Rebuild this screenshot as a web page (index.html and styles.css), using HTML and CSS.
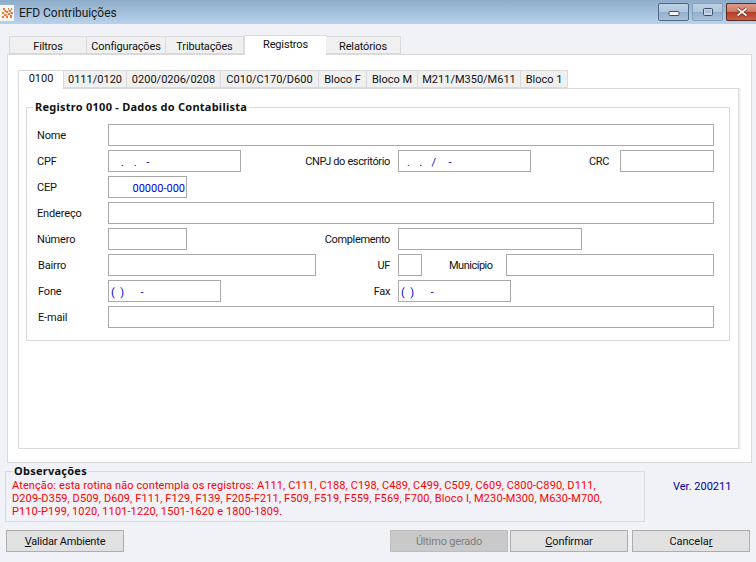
FILE: index.html
```html
<!DOCTYPE html>
<html lang="pt">
<head>
<meta charset="utf-8">
<title>EFD Contribuições</title>
<link rel="stylesheet" href="styles.css">
</head>
<body>
<div class="window">
  <header class="titlebar">
    <svg class="app-icon" width="14" height="16" viewBox="0 0 14 16">
      <rect width="14" height="16" fill="#f8f5f0"/>
      <path d="M3 3h2v2H3zM8 3h1v2H8zM11 3h1v2h-1zM5 5h1v2H5zM9 5h2v2H9zM2 7h2v2H2zM6 6h2v2H6zM11 7h2v2h-2zM4 9h2v2H4zM8 8h2v2H8zM2 11h2v2H2zM6 11h2v2H6zM10 10h2v3h-2z" fill="#ee7a36"/>
      <path d="M4 5h1v2H4zM8 5h1v1H8zM10 7h1v2h-1zM6 9h2v2H6z" fill="#f7b48a"/>
    </svg>
    <span class="title">EFD Contribuições</span>
    <div class="controls">
      <div class="ctl"><svg width="14" height="8" viewBox="0 0 14 8"><rect x="2" y="3.5" width="10" height="4" rx="1" fill="#f4f6f8" stroke="#39506b"/></svg></div>
      <div class="ctl ctl-max"><svg width="12" height="10" viewBox="0 0 12 10"><rect x="1.5" y="1.5" width="9" height="7" rx="1" fill="#c9d8e8" stroke="#39506b" stroke-width="1"/><rect x="3" y="3" width="6" height="3" fill="#a9bfd6"/></svg></div>
      <div class="ctl ctl-close"><svg width="14" height="10" viewBox="0 0 14 10"><path d="M2.5 1.5l9 7M11.5 1.5l-9 7" stroke="#4a2018" stroke-width="3.4"/><path d="M2.5 1.5l9 7M11.5 1.5l-9 7" stroke="#f7f2ef" stroke-width="2"/></svg></div>
    </div>
  </header>

  <nav class="tabs outer-tabs">
    <span class="tab t-filtros">Filtros</span>
    <span class="tab t-config">Configurações</span>
    <span class="tab t-trib">Tributações</span>
    <span class="tab t-reg active">Registros</span>
    <span class="tab t-rel">Relatórios</span>
  </nav>

  <main class="outer-panel">
    <nav class="tabs inner-tabs">
      <span class="itab i-0100 active">0100</span>
      <span class="itab i-0111">0111/0120</span>
      <span class="itab i-0200">0200/0206/0208</span>
      <span class="itab i-c010">C010/C170/D600</span>
      <span class="itab i-f">Bloco F</span>
      <span class="itab i-m">Bloco M</span>
      <span class="itab i-m211">M211/M350/M611</span>
      <span class="itab i-1">Bloco 1</span>
    </nav>
    <section class="inner-panel">
      <fieldset class="group">
        <legend>Registro 0100 - Dados do Contabilista</legend>
        <div class="row"><label class="lbl">Nome</label><div class="field w-full"></div></div>
        <div class="row">
          <label class="lbl">CPF</label><div class="field w-133 mask mask-cpf">.&nbsp;&nbsp;&nbsp;.&nbsp;&nbsp;&nbsp;-</div>
          <label class="lbl-r w-149">CNPJ do escritório</label><div class="field w-133 mask mask-cnpj">.&nbsp;&nbsp;&nbsp;.&nbsp;&nbsp;&nbsp;/&nbsp;&nbsp;&nbsp;&nbsp;-</div>
          <label class="lbl-r w-78 gap-11">CRC</label><div class="field w-94"></div>
        </div>
        <div class="row"><label class="lbl">CEP</label><div class="field w-79 mask mask-cep">00000-000</div></div>
        <div class="row"><label class="lbl">Endereço</label><div class="field w-full"></div></div>
        <div class="row">
          <label class="lbl">Número</label><div class="field w-79"></div>
          <label class="lbl-r w-203">Complemento</label><div class="field w-184"></div>
        </div>
        <div class="row">
          <label class="lbl alt">Bairro</label><div class="field w-208"></div>
          <label class="lbl-r w-74">UF</label><div class="field w-24"></div>
          <label class="lbl-mun">Município</label><div class="field w-208"></div>
        </div>
        <div class="row">
          <label class="lbl alt">Fone</label><div class="field w-113 mask mask-tel">(&nbsp;&nbsp;)&nbsp;&nbsp;&nbsp;&nbsp;&nbsp;&nbsp;-</div>
          <label class="lbl-r w-169">Fax</label><div class="field w-113 mask mask-tel">(&nbsp;&nbsp;)&nbsp;&nbsp;&nbsp;&nbsp;&nbsp;&nbsp;-</div>
        </div>
        <div class="row"><label class="lbl alt">E-mail</label><div class="field w-full"></div></div>
      </fieldset>
    </section>
  </main>

  <div class="info-row">
    <fieldset class="obs">
      <legend>Observações</legend>
      <p>Atenção: esta rotina não contempla os registros: A111, C111, C188, C198, C489, C499, C509, C609, C800-C890, D111,<br>D209-D359, D509, D609, F111, F129, F139, F205-F211, F509, F519, F559, F569, F700, Bloco I, M230-M300, M630-M700,<br>P110-P199, 1020, 1101-1220, 1501-1620 e 1800-1809.</p>
    </fieldset>
    <span class="version">Ver. 200211</span>
  </div>

  <footer class="buttons">
    <button class="btn"><u>V</u>alidar Ambiente</button>
    <span class="spring"></span>
    <button class="btn disabled">Último <u>g</u>erado</button>
    <button class="btn"><u>C</u>onfirmar</button>
    <button class="btn btn-last">Cancela<u>r</u></button>
  </footer>
</div>
</body>
</html>
```
FILE: styles.css
```css
* { box-sizing: border-box; }
html, body { margin: 0; padding: 0; }
body { width: 756px; height: 562px; overflow: hidden; background: #f0f2f8; font: 11px/13px Roboto, "Liberation Sans", sans-serif; color: #111; }
.window { width: 756px; height: 562px; display: flex; flex-direction: column; }

.titlebar { height: 24px; flex: none; display: flex; align-items: center; background: linear-gradient(#8eacc9, #b9d2ec); }
.app-icon { margin-left: 0; margin-top: 2px; flex: none; }
.title { margin-left: 5px; font-size: 12px; color: #1a1a1a; margin-top: 2px; letter-spacing: -0.05px; }
.controls { margin-left: auto; display: flex; gap: 3px; align-self: flex-start; margin-top: 3px; width: 98px; }
.ctl { width: 31px; height: 18px; border: 1px solid #4f6884; border-radius: 2px; background: linear-gradient(#bed1e5 0, #b0c6dd 48%, #94afcd 52%, #a9c1dc 100%); display: flex; align-items: center; justify-content: center; }
.ctl svg { display: block; }
.ctl-max { border-color: #87a0ba; }
.ctl-close { width: 30px; border-color: #5e2a20; border-right: 0; border-radius: 2px 0 0 2px; background: linear-gradient(#dc9a88 0, #cf7f6b 46%, #b33c24 52%, #c9604a 100%); }

.tabs { display: flex; flex: none; }
.outer-tabs { height: 19px; margin: 11px 0 0 9px; align-items: flex-end; position: relative; z-index: 1; }
.tab { height: 18px; border: 1px solid #dadada; border-bottom: 1px solid #d9d9d9; border-left: 0; background: #f0f0f0; display: flex; align-items: center; justify-content: center; padding-top: 2px; letter-spacing: -0.15px; }
.t-filtros { width: 78px; border-left: 1px solid #dadada; }
.t-config { width: 79px; }
.t-trib { width: 78px; }
.t-reg { width: 83px; }
.t-rel { width: 75px; }
.tab.active { height: 20px; margin-bottom: -1px; background: #fff; border-left: 1px solid #dadada; border-right: 1px solid #dadada; border-bottom: 0; padding-top: 0; padding-bottom: 3px; }
.t-rel { margin-left: -1px; }

.outer-panel { width: 745px; height: 409px; flex: none; margin-left: 7px; background: #fff; border: 1px solid #dadada; padding: 14px 0 0 10px; display: flex; flex-direction: column; }
.inner-tabs { height: 19px; align-items: flex-end; position: relative; z-index: 1; }
.itab { height: 18px; border: 1px solid #dadada; border-left: 0; background: #f0f0f0; display: flex; align-items: center; justify-content: center; }
.i-0100 { width: 46px; }
.i-0111 { width: 63px; }
.i-0200 { width: 94px; }
.i-c010 { width: 98px; }
.i-f { width: 48px; }
.i-m { width: 51px; }
.i-m211 { width: 103px; }
.i-1 { width: 47px; }
.itab.active { height: 19px; margin-bottom: -1px; background: #fff; border-left: 1px solid #dadada; border-bottom: 0; padding-bottom: 3px; }

.inner-panel { width: 721px; height: 361px; flex: none; margin-top: 0; border: 1px solid #dadada; box-shadow: 2px 0 0 #f2f2f2; padding: 12px 0 0 7px; background: #fff; }
.group { margin: 0; width: 704px; height: 240px; border: 1px solid #dadada; padding: 10px 0 0 10px; min-width: 0; }
.group legend { padding: 0 2px 0 2px; margin-left: -4px; font: 700 11px/13px "Noto Sans", sans-serif; letter-spacing: 0.25px; color: #111; position: relative; top: -1px; }

.row { display: flex; align-items: center; height: 22px; margin-bottom: 4px; letter-spacing: -0.15px; }
.lbl { width: 71px; flex: none; color: #111; }
.lbl.alt { padding-left: 1px; }
.lbl-r { flex: none; text-align: right; margin-right: 8px; letter-spacing: -0.35px; }
.lbl-mun { flex: none; width: 84px; padding-left: 27px; color: #111; letter-spacing: -0.5px; }
.gap-11 { margin-right: 11px; }
.field { height: 22px; flex: none; background: #fff; border: 1px solid #a9a9a9; }
.w-full { width: 606px; }
.w-133 { width: 133px; }
.w-79 { width: 79px; }
.w-94 { width: 94px; }
.w-184 { width: 184px; }
.w-208 { width: 208px; }
.w-24 { width: 24px; }
.w-113 { width: 113px; }
.w-149 { width: 149px; }
.w-78 { width: 78px; }
.w-203 { width: 203px; }
.w-74 { width: 74px; }
.w-169 { width: 79px; margin-left: 90px; }

.mask { color: #0000e0; line-height: 20px; padding-top: 2px; white-space: pre; letter-spacing: 0; }
.mask-cpf { padding-left: 12px; letter-spacing: 0.4px; }
.mask-cnpj { padding-left: 8px; letter-spacing: 0.3px; }
.mask-cep { text-align: right; padding-right: 1px; }
.mask-tel { padding-left: 2px; }

.info-row { display: flex; flex: none; height: 60px; margin-top: 2px; padding-left: 5px; position: relative; }
.obs { margin: 0; width: 640px; height: 57px; border: 1px solid #dadada; padding: 2px 0 0 6px; min-width: 0; }
.obs legend { padding: 0 1px; margin-left: 1px; font: 700 11px/13px "Noto Sans", sans-serif; letter-spacing: 0.25px; color: #111; position: relative; top: -1px; }
.obs p { margin: -1px 0 0; color: #ff0000; line-height: 13px; letter-spacing: 0.105px; }
.version { margin: 15px 0 0 28px; color: #00009a; }

.buttons { display: flex; flex: none; height: 22px; margin-top: 5px; padding: 0 6px; gap: 2px; }
.btn { width: 118px; height: 22px; padding: 0; background: #e1e1e1; border: 1px solid #adadad; font: inherit; color: #111; letter-spacing: -0.2px; }
.spring { flex: 1; }
.disabled { background: #c9c9c9; color: #7d7d7d; border-color: #bdbdbd; }
.btn-last { margin-left: 2px; letter-spacing: 0; }
```
